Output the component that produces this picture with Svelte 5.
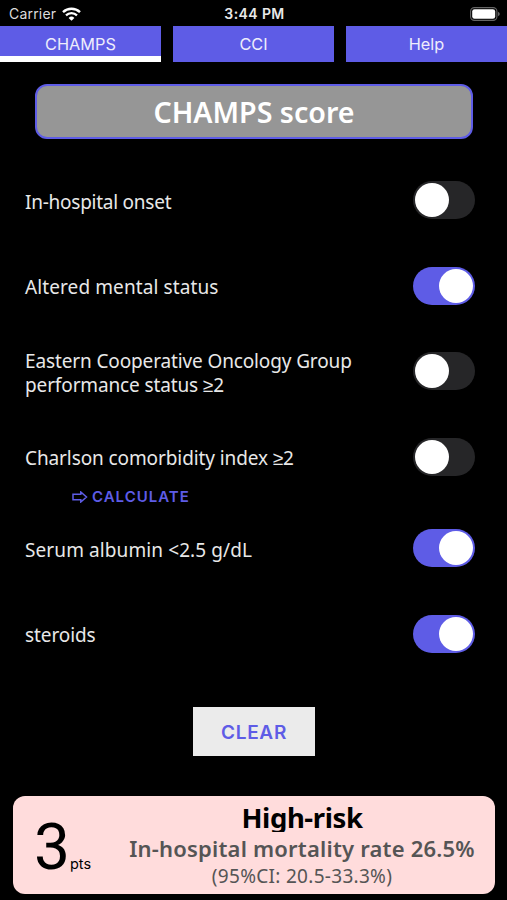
<script>
  const tabs = ['CHAMPS', 'CCI', 'Help'];
  let current = 'CHAMPS';

  let items = [
    { label: 'In-hospital onset', on: false, tracking: -0.25 },
    { label: 'Altered mental status', on: true, tracking: 0.1 },
    {
      label: 'Eastern Cooperative Oncology Group performance status ≥2',
      on: false,
      tracking: -0.13
    },
    { label: 'Charlson comorbidity index ≥2', on: false, tracking: -0.1, link: true },
    { label: 'Serum albumin <2.5 g/dL', on: true, tracking: 0.1 },
    { label: 'steroids', on: true, tracking: -0.1 }
  ];

  function toggle(i) {
    items[i].on = !items[i].on;
  }

  function clear() {
    items = items.map((item) => ({ ...item, on: false }));
  }

  $: points = items.filter((item) => item.on).length;
</script>

<div class="screen">
  <div class="status">
    <div class="carrier">
      <span>Carrier</span>
      <svg width="19" height="14" viewBox="0 0 19 14" fill="none" stroke="#fff">
        <path d="M1 5.1a12.3 12.3 0 0 1 17 0" stroke-width="2.4" />
        <path d="M4 8.3a8 8 0 0 1 11 0" stroke-width="2.3" />
        <path d="M9.5 13.7 6.6 10.9a4.2 4.2 0 0 1 5.8 0z" fill="#fff" stroke="none" />
      </svg>
    </div>
    <div class="time">3:44 PM</div>
    <svg class="battery" width="30" height="14" viewBox="0 0 30 14">
      <rect x=".6" y=".6" width="26.3" height="12.8" rx="3.8" fill="none" stroke="#666" stroke-width="1.1" />
      <rect x="2.2" y="2.2" width="23" height="9.6" rx="2.3" fill="#fff" />
      <path d="M28 4.7q1.8.8 1.8 2.3T28 9.3z" fill="#666" />
    </svg>
  </div>

  <nav>
    {#each tabs as tab}
      <button class="tab" class:active={tab === current} on:click={() => (current = tab)}>{tab}</button>
    {/each}
  </nav>

  <h1>CHAMPS score</h1>

  <div class="list">
    {#each items as item, i}
      <div class="row">
        <span class="label" style="letter-spacing: {item.tracking}px">{item.label}</span>
        <button class="switch" class:on={item.on} aria-label={item.label} on:click={() => toggle(i)}>
          <span class="knob"></span>
        </button>
      </div>
      {#if item.link}
        <button class="calculate">
          <svg width="16" height="12" viewBox="0 0 16 12" fill="none" stroke="currentColor" stroke-width="1.5">
            <path d="M1 3.3h7.8V1l5.7 5-5.7 5V8.7H1z" />
          </svg>
          <span>CALCULATE</span>
        </button>
      {/if}
    {/each}
  </div>

  <button class="clear" on:click={clear}>CLEAR</button>

  <div class="result">
    <div class="points">
      <span class="number">{points}</span>
      <span class="unit">pts</span>
    </div>
    <div class="risk">
      <div class="level">High-risk</div>
      <div class="rate">In-hospital mortality rate 26.5%</div>
      <div class="ci">(95%CI: 20.5-33.3%)</div>
    </div>
  </div>
</div>

<style>
  :global(body) {
    margin: 0;
    background: #000;
  }
  .screen {
    box-sizing: border-box;
    height: 900px;
    overflow: hidden;
    background: #000;
    color: #fff;
    font-family: Inter, sans-serif;
  }
  button {
    padding: 0;
    border: none;
    background: none;
    font-family: inherit;
    cursor: pointer;
  }

  .status {
    display: grid;
    grid-template-columns: 1fr auto 1fr;
    align-items: center;
    box-sizing: border-box;
    height: 25.5px;
    padding: 1px 7px 0 9px;
    font-size: 14px;
    line-height: 24px;
  }
  .carrier {
    display: flex;
    align-items: center;
    gap: 6px;
    color: #dcdcdc;
    letter-spacing: 0.2px;
  }
  .carrier span,
  .time {
    padding-top: 1px;
  }
  .time {
    color: #e8e8e8;
    font-weight: 600;
    letter-spacing: 0.4px;
  }
  .battery {
    justify-self: end;
  }

  nav {
    display: grid;
    grid-template-columns: repeat(3, 1fr);
    gap: 12px;
    height: 36.5px;
  }
  .tab {
    box-sizing: border-box;
    height: 36.5px;
    border-bottom: 6px solid #5e5ce6;
    background: #5e5ce6;
    color: #eeedfc;
    font-size: 16.3px;
    line-height: 24px;
    padding-top: 6px;
  }
  .tab.active {
    border-bottom-color: #fff;
  }

  h1 {
    box-sizing: border-box;
    height: 55px;
    margin: 22px 34px 0 35px;
    border: 2px solid #5e5ce6;
    border-radius: 12px;
    background: #969696;
    font-family: 'Noto Sans', sans-serif;
    font-size: 28.6px;
    font-weight: 600;
    line-height: 51px;
    text-align: center;
  }

  .list {
    display: flex;
    flex-direction: column;
    padding: 18.5px 32px 0 25px;
  }
  .row {
    display: flex;
    align-items: center;
    justify-content: space-between;
    height: 85.5px;
  }
  .label {
    width: 345px;
    padding-top: 3px;
    color: #e8e8e8;
    font-family: 'Noto Sans', sans-serif;
    font-size: 19px;
    line-height: 24px;
  }
  .switch {
    display: flex;
    box-sizing: border-box;
    width: 62px;
    height: 38px;
    padding: 2px;
    border-radius: 19px;
    background: #262628;
  }
  .switch.on {
    justify-content: flex-end;
    background: #5e5ce6;
  }
  .knob {
    width: 34px;
    height: 34px;
    border-radius: 50%;
    background: #fff;
  }
  .calculate {
    display: flex;
    align-items: center;
    gap: 4px;
    height: 20px;
    margin: -13px 0 -1px 47px;
    color: #5e5ce6;
    font-size: 15px;
    font-weight: 600;
    letter-spacing: 1px;
  }

  .clear {
    display: block;
    width: 122px;
    height: 49px;
    margin: 30px auto 0 193px;
    background: #ebebeb;
    color: #5e5ce6;
    font-size: 19px;
    font-weight: 600;
    letter-spacing: 0.7px;
    line-height: 51px;
  }

  .result {
    display: flex;
    box-sizing: border-box;
    height: 98px;
    margin: 40px 12px 0 13px;
    padding: 0 19px 0 21px;
    border-radius: 12px;
    background: #ffdcdc;
    color: #000;
  }
  .points {
    display: flex;
    align-items: baseline;
    width: 94px;
    line-height: 104px;
  }
  .number {
    font-family: Roboto, sans-serif;
    font-size: 64px;
  }
  .unit {
    font-size: 14.5px;
  }
  .risk {
    flex: 1;
    font-family: 'Noto Sans', sans-serif;
    text-align: center;
    white-space: nowrap;
  }
  /* the heading box is a little shorter than its descenders */
  .level {
    height: 36px;
    overflow: hidden;
    font-size: 27.5px;
    font-weight: 700;
    letter-spacing: -0.4px;
    line-height: 43px;
  }
  .rate {
    color: #555;
    font-size: 22px;
    font-weight: 600;
    letter-spacing: 0.2px;
    line-height: 32px;
  }
  .ci {
    color: #555;
    font-size: 19px;
    letter-spacing: 0.3px;
    line-height: 24px;
  }
</style>
